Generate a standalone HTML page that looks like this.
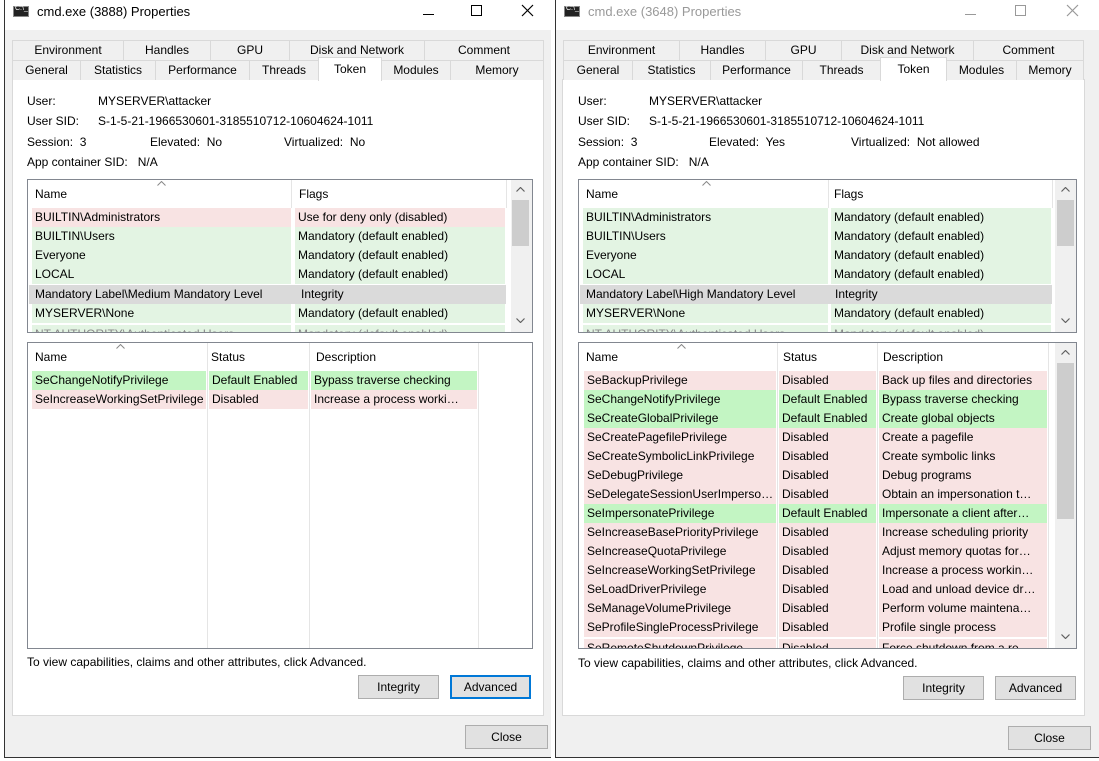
<!DOCTYPE html>
<html><head><meta charset="utf-8"><style>
*{margin:0;padding:0;box-sizing:border-box}
body{width:1099px;height:761px;position:relative;overflow:hidden;background:#fff;font-family:"Liberation Sans",sans-serif;font-size:12px;color:#000}
.a{position:absolute;white-space:nowrap}
.tab{position:absolute;height:20px;border:1px solid #d9d9d9;border-bottom:none;background:#f0f0f0;text-align:center;line-height:19px}
.panel{position:absolute;background:#fff;border:1px solid #d9d9d9}
.box{position:absolute;border:1px solid #828790;background:#fff;overflow:hidden}
.c{position:absolute;height:19px;line-height:19px;padding-left:3px;white-space:nowrap;overflow:hidden}
.g{background:#e3f4e3}.p{background:#f8e3e3}.G{background:#c3f5c3}.s{background:#dadada}
.btn{position:absolute;height:24px;background:#e1e1e1;border:1px solid #adadad;text-align:center;line-height:22px}
.sb{position:absolute;background:#f0f0f0}
.th{position:absolute;background:#cdcdcd}
.hd{position:absolute;height:24px;line-height:24px;padding-left:7px}
.vl{position:absolute;width:1px;background:#e5e5e5}
.ar{position:absolute}
</style></head><body>

<!-- LEFT WINDOW -->
<div class="a" style="left:4px;top:0;width:547px;height:758px;background:#f0f0f0;border-left:1px solid #333;border-bottom:1px solid #333"></div>
<div class="a" style="left:5px;top:0;width:546px;height:30px;background:#fff"></div>
<div class="a" style="left:13px;top:6px;width:16px;height:11px;background:#222;border:1px solid #888"><span style="position:absolute;left:1px;top:-2px;font-size:7px;color:#fff">C:\_</span></div>
<div class="a" style="left:37px;top:4px;font-size:13px">cmd.exe (3888) Properties</div>
<div class="a" style="left:423px;top:14px;width:11px;height:1px;background:#000"></div>
<div class="a" style="left:471px;top:5px;width:11px;height:11px;border:1px solid #000"></div>
<svg class="a" style="left:521px;top:4px" width="13" height="13"><path d="M1 1L12 12M12 1L1 12" stroke="#000" stroke-width="1.2"/></svg>

<div class="tab" style="left:12px;top:40px;width:112px">Environment</div>
<div class="tab" style="left:123px;top:40px;width:88px">Handles</div>
<div class="tab" style="left:210px;top:40px;width:80px">GPU</div>
<div class="tab" style="left:289px;top:40px;width:136px">Disk and Network</div>
<div class="tab" style="left:424px;top:40px;width:120px">Comment</div>
<div class="panel" style="left:12px;top:79px;width:532px;height:637px"></div>
<div class="tab" style="left:12px;top:60px;width:69px">General</div>
<div class="tab" style="left:80px;top:60px;width:76px">Statistics</div>
<div class="tab" style="left:155px;top:60px;width:95px">Performance</div>
<div class="tab" style="left:249px;top:60px;width:70px">Threads</div>
<div class="tab" style="left:381px;top:60px;width:70px">Modules</div>
<div class="tab" style="left:450px;top:60px;width:94px">Memory</div>
<div class="tab" style="left:318px;top:57px;width:64px;height:24px;background:#fff;line-height:22px">Token</div>

<div class="a" style="left:27px;top:94px">User:</div><div class="a" style="left:98px;top:94px">MYSERVER\attacker</div>
<div class="a" style="left:27px;top:114px">User SID:</div><div class="a" style="left:98px;top:114px">S-1-5-21-1966530601-3185510712-10604624-1011</div>
<div class="a" style="left:27px;top:135px">Session:&nbsp; 3</div>
<div class="a" style="left:150px;top:135px">Elevated:&nbsp; No</div>
<div class="a" style="left:284px;top:135px">Virtualized:&nbsp; No</div>
<div class="a" style="left:27px;top:155px">App container SID:&nbsp;&nbsp; N/A</div>

<div class="box" style="left:27px;top:179px;width:506px;height:154px">
 <div class="hd" style="left:0;top:2px">Name</div><div class="hd" style="left:264px;top:2px">Flags</div>
 <svg class="ar" style="left:129px;top:1px" width="9" height="5"><path d="M0.5 4.5L4.5 0.5L8.5 4.5" fill="none" stroke="#888"/></svg>
 <div class="vl" style="left:263px;top:0;height:28px"></div><div class="vl" style="left:478px;top:0;height:28px"></div>
 <div class="c p" style="left:4px;top:28px;width:259px">BUILTIN\Administrators</div><div class="c p" style="left:267px;top:28px;width:210px">Use for deny only (disabled)</div>
 <div class="c g" style="left:4px;top:47px;width:259px">BUILTIN\Users</div><div class="c g" style="left:267px;top:47px;width:210px">Mandatory (default enabled)</div>
 <div class="c g" style="left:4px;top:66px;width:259px">Everyone</div><div class="c g" style="left:267px;top:66px;width:210px">Mandatory (default enabled)</div>
 <div class="c g" style="left:4px;top:85px;width:259px">LOCAL</div><div class="c g" style="left:267px;top:85px;width:210px">Mandatory (default enabled)</div>
 <div class="c s" style="left:1px;top:105px;width:477px;padding-left:6px">Mandatory Label\Medium Mandatory Level<span style="position:absolute;left:272px">Integrity</span></div>
 <div class="c g" style="left:4px;top:124px;width:259px">MYSERVER\None</div><div class="c g" style="left:267px;top:124px;width:210px">Mandatory (default enabled)</div>
 <div class="c g" style="left:4px;top:145px;width:259px;color:#888">NT AUTHORITY\Authenticated Users</div><div class="c g" style="left:267px;top:145px;width:210px;color:#888">Mandatory (default enabled)</div>
 <div class="sb" style="left:483px;top:0;width:21px;height:152px"></div>
 <div class="th" style="left:484px;top:20px;width:17px;height:46px"></div>
 <svg class="ar" style="left:488px;top:7px" width="9" height="5"><path d="M0.5 4.5L4.5 0.5L8.5 4.5" fill="none" stroke="#606060" stroke-width="1.2"/></svg>
 <svg class="ar" style="left:488px;top:138px" width="9" height="5"><path d="M0.5 0.5L4.5 4.5L8.5 0.5" fill="none" stroke="#606060" stroke-width="1.2"/></svg>
</div>

<div class="box" style="left:27px;top:342px;width:506px;height:307px">
 <div class="hd" style="left:0;top:2px">Name</div><div class="hd" style="left:176px;top:2px">Status</div><div class="hd" style="left:281px;top:2px">Description</div>
 <svg class="ar" style="left:88px;top:1px" width="9" height="5"><path d="M0.5 4.5L4.5 0.5L8.5 4.5" fill="none" stroke="#888"/></svg>
 <div class="vl" style="left:179px;top:0;height:305px"></div><div class="vl" style="left:281px;top:0;height:305px"></div><div class="vl" style="left:450px;top:0;height:305px"></div>
 <div class="c G" style="left:4px;top:28px;width:174px">SeChangeNotifyPrivilege</div><div class="c G" style="left:181px;top:28px;width:99px">Default Enabled</div><div class="c G" style="left:283px;top:28px;width:166px">Bypass traverse checking</div>
 <div class="c p" style="left:4px;top:47px;width:174px">SeIncreaseWorkingSetPrivilege</div><div class="c p" style="left:181px;top:47px;width:99px">Disabled</div><div class="c p" style="left:283px;top:47px;width:166px">Increase a process worki…</div>
</div>

<div class="a" style="left:27px;top:655px">To view capabilities, claims and other attributes, click Advanced.</div>
<div class="btn" style="left:358px;top:675px;width:81px">Integrity</div>
<div class="btn" style="left:450px;top:675px;width:81px;border:2px solid #0078d7;line-height:20px">Advanced</div>
<div class="btn" style="left:465px;top:725px;width:83px">Close</div>

<!-- RIGHT WINDOW -->
<div class="a" style="left:555px;top:0;width:544px;height:758px;background:#f0f0f0;border-left:1px solid #333;border-bottom:1px solid #333"></div>
<div class="a" style="left:556px;top:0;width:543px;height:30px;background:#fff"></div>
<div class="a" style="left:564px;top:6px;width:16px;height:11px;background:#222;border:1px solid #888"><span style="position:absolute;left:1px;top:-2px;font-size:7px;color:#fff">C:\_</span></div>
<div class="a" style="left:588px;top:4px;font-size:13px;color:#999">cmd.exe (3648) Properties</div>
<div class="a" style="left:965px;top:14px;width:11px;height:1px;background:#999"></div>
<div class="a" style="left:1015px;top:5px;width:11px;height:11px;border:1px solid #999"></div>
<svg class="a" style="left:1066px;top:4px" width="13" height="13"><path d="M1 1L12 12M12 1L1 12" stroke="#999" stroke-width="1.2"/></svg>

<div class="tab" style="left:563px;top:40px;width:117px">Environment</div>
<div class="tab" style="left:679px;top:40px;width:87px">Handles</div>
<div class="tab" style="left:765px;top:40px;width:77px">GPU</div>
<div class="tab" style="left:841px;top:40px;width:133px">Disk and Network</div>
<div class="tab" style="left:973px;top:40px;width:111px">Comment</div>
<div class="panel" style="left:562px;top:79px;width:523px;height:637px"></div>
<div class="tab" style="left:563px;top:60px;width:70px">General</div>
<div class="tab" style="left:632px;top:60px;width:79px">Statistics</div>
<div class="tab" style="left:710px;top:60px;width:93px">Performance</div>
<div class="tab" style="left:802px;top:60px;width:79px">Threads</div>
<div class="tab" style="left:946px;top:60px;width:71px">Modules</div>
<div class="tab" style="left:1016px;top:60px;width:68px">Memory</div>
<div class="tab" style="left:880px;top:57px;width:67px;height:24px;background:#fff;line-height:22px">Token</div>

<div class="a" style="left:578px;top:94px">User:</div><div class="a" style="left:649px;top:94px">MYSERVER\attacker</div>
<div class="a" style="left:578px;top:114px">User SID:</div><div class="a" style="left:649px;top:114px">S-1-5-21-1966530601-3185510712-10604624-1011</div>
<div class="a" style="left:578px;top:135px">Session:&nbsp; 3</div>
<div class="a" style="left:709px;top:135px">Elevated:&nbsp; Yes</div>
<div class="a" style="left:851px;top:135px">Virtualized:&nbsp; Not allowed</div>
<div class="a" style="left:578px;top:155px">App container SID:&nbsp;&nbsp; N/A</div>

<div class="box" style="left:578px;top:179px;width:499px;height:154px">
 <div class="hd" style="left:0;top:2px">Name</div><div class="hd" style="left:248px;top:2px">Flags</div>
 <svg class="ar" style="left:123px;top:1px" width="9" height="5"><path d="M0.5 4.5L4.5 0.5L8.5 4.5" fill="none" stroke="#888"/></svg>
 <div class="vl" style="left:249px;top:0;height:28px"></div><div class="vl" style="left:473px;top:0;height:28px"></div>
 <div class="c g" style="left:4px;top:28px;width:245px">BUILTIN\Administrators</div><div class="c g" style="left:252px;top:28px;width:220px">Mandatory (default enabled)</div>
 <div class="c g" style="left:4px;top:47px;width:245px">BUILTIN\Users</div><div class="c g" style="left:252px;top:47px;width:220px">Mandatory (default enabled)</div>
 <div class="c g" style="left:4px;top:66px;width:245px">Everyone</div><div class="c g" style="left:252px;top:66px;width:220px">Mandatory (default enabled)</div>
 <div class="c g" style="left:4px;top:85px;width:245px">LOCAL</div><div class="c g" style="left:252px;top:85px;width:220px">Mandatory (default enabled)</div>
 <div class="c s" style="left:1px;top:105px;width:472px;padding-left:6px">Mandatory Label\High Mandatory Level<span style="position:absolute;left:255px">Integrity</span></div>
 <div class="c g" style="left:4px;top:124px;width:245px">MYSERVER\None</div><div class="c g" style="left:252px;top:124px;width:220px">Mandatory (default enabled)</div>
 <div class="c g" style="left:4px;top:145px;width:245px;color:#888">NT AUTHORITY\Authenticated Users</div><div class="c g" style="left:252px;top:145px;width:220px;color:#888">Mandatory (default enabled)</div>
 <div class="sb" style="left:476px;top:0;width:21px;height:152px"></div>
 <div class="th" style="left:478px;top:20px;width:17px;height:46px"></div>
 <svg class="ar" style="left:482px;top:7px" width="9" height="5"><path d="M0.5 4.5L4.5 0.5L8.5 4.5" fill="none" stroke="#606060" stroke-width="1.2"/></svg>
 <svg class="ar" style="left:482px;top:138px" width="9" height="5"><path d="M0.5 0.5L4.5 4.5L8.5 0.5" fill="none" stroke="#606060" stroke-width="1.2"/></svg>
</div>

<div class="box" style="left:578px;top:342px;width:499px;height:307px">
 <div class="hd" style="left:0;top:2px">Name</div><div class="hd" style="left:197px;top:2px">Status</div><div class="hd" style="left:297px;top:2px">Description</div>
 <svg class="ar" style="left:98px;top:1px" width="9" height="5"><path d="M0.5 4.5L4.5 0.5L8.5 4.5" fill="none" stroke="#888"/></svg>
 <div class="vl" style="left:198px;top:0;height:305px"></div><div class="vl" style="left:298px;top:0;height:305px"></div><div class="vl" style="left:469px;top:0;height:305px"></div>
 <div style="position:absolute;left:0;top:28px;width:470px">
  <div class="c p" style="left:5px;top:0;width:192px">SeBackupPrivilege</div><div class="c p" style="left:200px;top:0;width:97px">Disabled</div><div class="c p" style="left:300px;top:0;width:168px">Back up files and directories</div>
  <div class="c G" style="left:5px;top:19px;width:192px">SeChangeNotifyPrivilege</div><div class="c G" style="left:200px;top:19px;width:97px">Default Enabled</div><div class="c G" style="left:300px;top:19px;width:168px">Bypass traverse checking</div>
  <div class="c G" style="left:5px;top:38px;width:192px">SeCreateGlobalPrivilege</div><div class="c G" style="left:200px;top:38px;width:97px">Default Enabled</div><div class="c G" style="left:300px;top:38px;width:168px">Create global objects</div>
  <div class="c p" style="left:5px;top:57px;width:192px">SeCreatePagefilePrivilege</div><div class="c p" style="left:200px;top:57px;width:97px">Disabled</div><div class="c p" style="left:300px;top:57px;width:168px">Create a pagefile</div>
  <div class="c p" style="left:5px;top:76px;width:192px">SeCreateSymbolicLinkPrivilege</div><div class="c p" style="left:200px;top:76px;width:97px">Disabled</div><div class="c p" style="left:300px;top:76px;width:168px">Create symbolic links</div>
  <div class="c p" style="left:5px;top:95px;width:192px">SeDebugPrivilege</div><div class="c p" style="left:200px;top:95px;width:97px">Disabled</div><div class="c p" style="left:300px;top:95px;width:168px">Debug programs</div>
  <div class="c p" style="left:5px;top:114px;width:192px">SeDelegateSessionUserImperso…</div><div class="c p" style="left:200px;top:114px;width:97px">Disabled</div><div class="c p" style="left:300px;top:114px;width:168px">Obtain an impersonation t…</div>
  <div class="c G" style="left:5px;top:133px;width:192px">SeImpersonatePrivilege</div><div class="c G" style="left:200px;top:133px;width:97px">Default Enabled</div><div class="c G" style="left:300px;top:133px;width:168px">Impersonate a client after…</div>
  <div class="c p" style="left:5px;top:152px;width:192px">SeIncreaseBasePriorityPrivilege</div><div class="c p" style="left:200px;top:152px;width:97px">Disabled</div><div class="c p" style="left:300px;top:152px;width:168px">Increase scheduling priority</div>
  <div class="c p" style="left:5px;top:171px;width:192px">SeIncreaseQuotaPrivilege</div><div class="c p" style="left:200px;top:171px;width:97px">Disabled</div><div class="c p" style="left:300px;top:171px;width:168px">Adjust memory quotas for…</div>
  <div class="c p" style="left:5px;top:190px;width:192px">SeIncreaseWorkingSetPrivilege</div><div class="c p" style="left:200px;top:190px;width:97px">Disabled</div><div class="c p" style="left:300px;top:190px;width:168px">Increase a process workin…</div>
  <div class="c p" style="left:5px;top:209px;width:192px">SeLoadDriverPrivilege</div><div class="c p" style="left:200px;top:209px;width:97px">Disabled</div><div class="c p" style="left:300px;top:209px;width:168px">Load and unload device dr…</div>
  <div class="c p" style="left:5px;top:228px;width:192px">SeManageVolumePrivilege</div><div class="c p" style="left:200px;top:228px;width:97px">Disabled</div><div class="c p" style="left:300px;top:228px;width:168px">Perform volume maintena…</div>
  <div class="c p" style="left:5px;top:247px;width:192px">SeProfileSingleProcessPrivilege</div><div class="c p" style="left:200px;top:247px;width:97px">Disabled</div><div class="c p" style="left:300px;top:247px;width:168px">Profile single process</div>
  <div class="c p" style="left:5px;top:268px;width:192px">SeRemoteShutdownPrivilege</div><div class="c p" style="left:200px;top:268px;width:97px">Disabled</div><div class="c p" style="left:300px;top:268px;width:168px">Force shutdown from a re…</div>
 </div>
 <div class="sb" style="left:476px;top:0;width:21px;height:305px"></div>
 <div class="th" style="left:478px;top:20px;width:17px;height:156px"></div>
 <svg class="ar" style="left:482px;top:7px" width="9" height="5"><path d="M0.5 4.5L4.5 0.5L8.5 4.5" fill="none" stroke="#606060" stroke-width="1.2"/></svg>
 <svg class="ar" style="left:482px;top:291px" width="9" height="5"><path d="M0.5 0.5L4.5 4.5L8.5 0.5" fill="none" stroke="#606060" stroke-width="1.2"/></svg>
</div>

<div class="a" style="left:578px;top:656px">To view capabilities, claims and other attributes, click Advanced.</div>
<div class="btn" style="left:903px;top:676px;width:81px">Integrity</div>
<div class="btn" style="left:995px;top:676px;width:81px">Advanced</div>
<div class="btn" style="left:1008px;top:726px;width:83px">Close</div>
</body></html>
